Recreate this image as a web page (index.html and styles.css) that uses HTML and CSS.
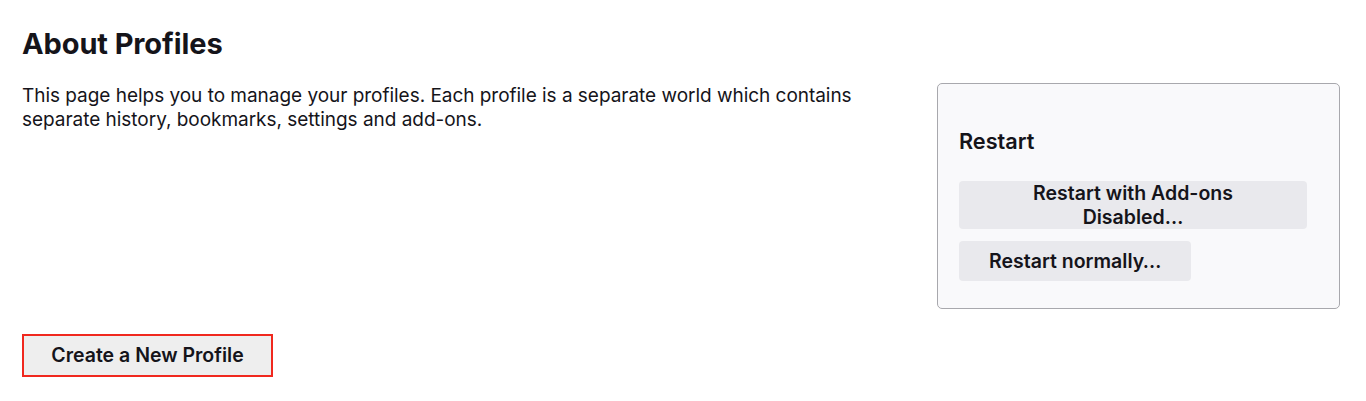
FILE: index.html
```html
<!DOCTYPE html>
<html lang="en">
<head>
<meta charset="utf-8">
<title>About Profiles</title>
<link rel="stylesheet" href="styles.css">
</head>
<body>
<div class="page">
  <h1 class="title">About Profiles</h1>
  <div class="layout">
    <div class="main">
      <p class="intro">This page helps you to manage your profiles. Each profile is a separate world which contains separate history, bookmarks, settings and add-ons.</p>
    </div>
    <aside class="sidebar">
      <h2 class="side-title">Restart</h2>
      <button class="btn btn-wide">Restart with Add-ons Disabled…</button>
      <button class="btn">Restart normally…</button>
    </aside>
  </div>
  <div class="actions">
    <button class="btn btn-create">Create a New Profile</button>
  </div>
</div>
</body>
</html>
```

FILE: styles.css
```css
* { box-sizing: border-box; }
html, body { margin: 0; padding: 0; background: #fff; }
body {
  font-family: Inter, "Noto Sans", sans-serif;
  color: #15141a;
}
.page {
  padding: 26px 26px 0 22px;
}
.title {
  margin: 0;
  font-size: 29px;
  font-weight: 700;
  line-height: 36px;
  letter-spacing: -0.1px;
}
.layout {
  display: flex;
  align-items: flex-start;
  margin-top: 21px;
}
.main {
  flex: 1;
  padding-right: 80px;
}
.intro {
  margin: 0;
  font-size: 19px;
  line-height: 24px;
  padding-top: 1px;
  letter-spacing: -0.03px;
}
.sidebar {
  width: 403px;
  flex: none;
  margin-top: 0;
  background: #f9f9fb;
  border: 1px solid #a8a8ad;
  border-radius: 5px;
  padding: 43px 31px 27px 21px;
  display: flex;
  flex-direction: column;
  align-items: flex-start;
  gap: 12px;
}
.side-title {
  margin: 0 0 14px;
  font-size: 21.7px;
  font-weight: 600;
  line-height: 28px;
}
.btn {
  font-family: inherit;
  font-size: 19.5px;
  font-weight: 600;
  line-height: 24px;
  color: #15141a;
  background: #e9e9ed;
  border: none;
  border-radius: 4px;
  padding: 8px 30px;
  min-height: 40px;
  text-align: center;
}
.btn-wide {
  width: 348px;
  min-height: 48px;
  padding: 0 58px;
}
.actions {
  margin-top: 25px;
}
.btn-create {
  border: 2px solid #f0281e;
  border-radius: 0;
  background: #eeeeee;
  padding: 7px 27px;
  line-height: 25px;
  min-height: 43px;
  width: 251px;
}
```
